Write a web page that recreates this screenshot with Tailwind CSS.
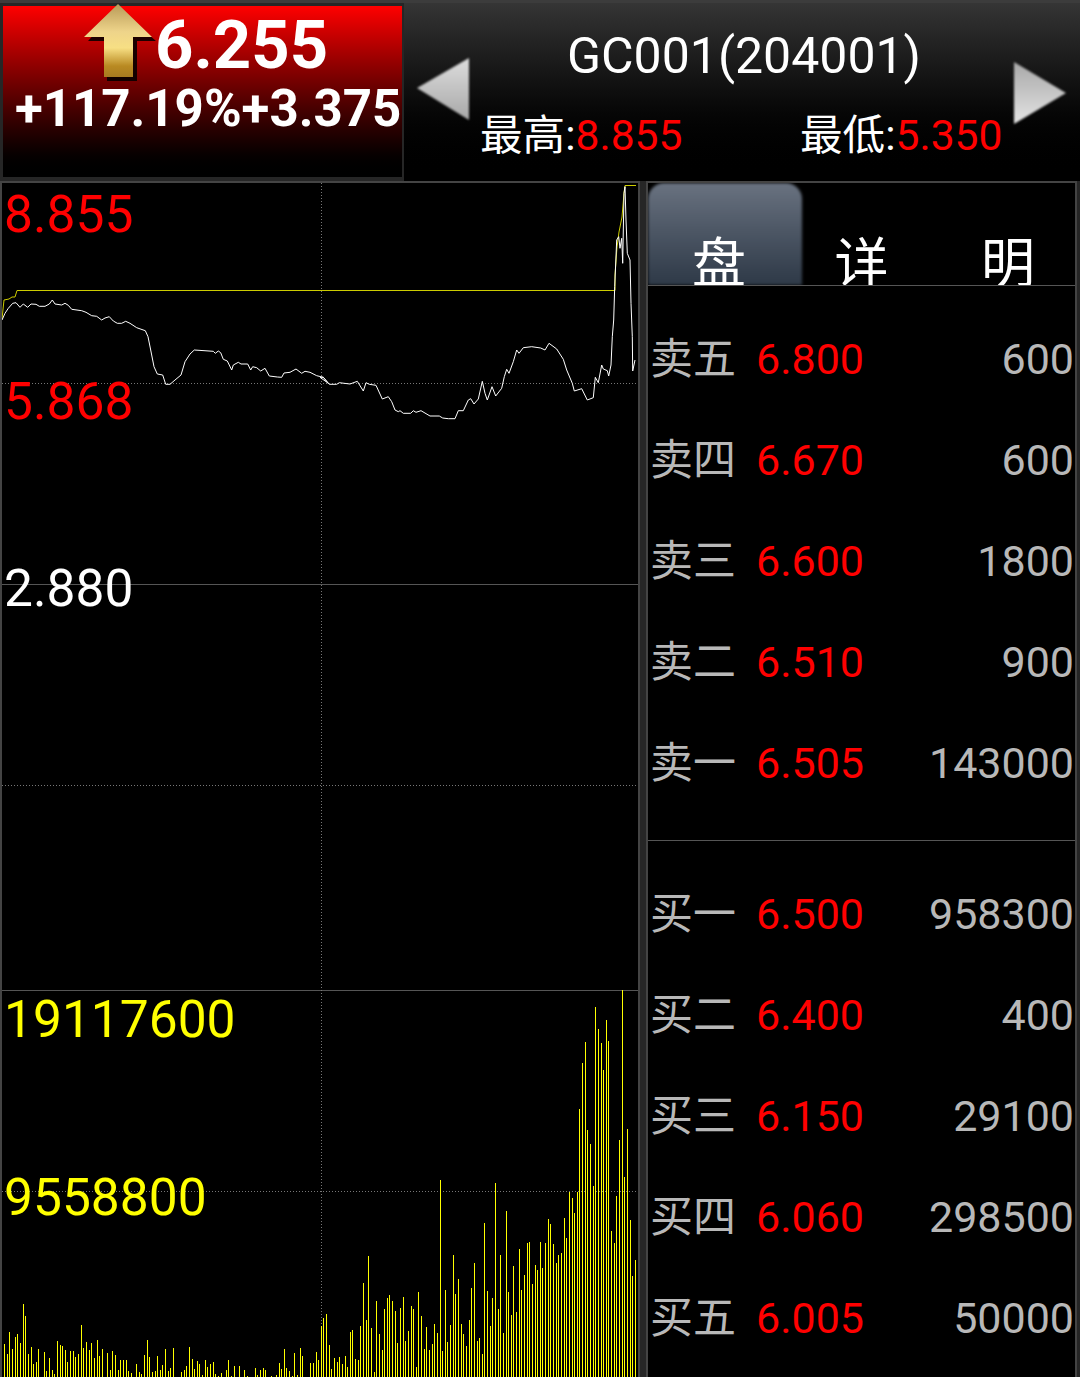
<!DOCTYPE html>
<html lang="zh">
<head>
    <meta charset="UTF-8">
    <title>GC001</title>
    <script src="https://cdn.jsdelivr.net/npm/@tailwindcss/browser@4"></script>
</head>
<body class="bg-[#262626] w-[1080px] h-[1377px] overflow-hidden font-['Roboto','Noto_Sans_CJK_SC',sans-serif]">

    <!-- header -->
    <div class="h-[181px] flex border-t-[3px] border-[#3c3c3c] bg-[#262626]">
        <div class="relative w-[399px] h-[171px] ml-[3px] mt-[3px] bg-gradient-to-b from-[#ff0000] to-[#000000] text-white font-bold">
            <svg class="absolute left-[75px] top-[-8px] blur-[0.5px]" width="84" height="86" viewBox="78 -2 84 86">
                <defs>
                    <linearGradient id="gold" x1="0" y1="0" x2="0" y2="1">
                        <stop offset="0" stop-color="#b89a58"/>
                        <stop offset="0.38" stop-color="#eed48a"/>
                        <stop offset="0.6" stop-color="#f7df84"/>
                        <stop offset="0.85" stop-color="#b98a22"/>
                        <stop offset="1" stop-color="#a87a20"/>
                    </linearGradient>
                </defs>
                <path d="M118 8L156 41H137V81H107V41H88Z" fill="#000" opacity="0.85"/>
                <path d="M118 4L152 37H133V77H104V37H84Z" fill="url(#gold)"/>
            </svg>
            <div class="absolute left-[152px] top-[3px] text-[67px] leading-[72px]">6.255</div>
            <div class="absolute left-[12px] top-[73px] text-[51px] leading-[60px] whitespace-nowrap">+117.19%+3.375</div>
        </div>
        <div class="relative ml-[2px] flex-1 bg-gradient-to-b from-[#353535] to-[#000000] text-white">
            <svg class="absolute left-[10px] top-[52px] blur-[1px]" width="60" height="70" viewBox="0 0 60 70">
                <defs>
                    <linearGradient id="triLeft" x1="0" y1="0" x2="0" y2="1">
                        <stop offset="0" stop-color="#dddddd"/>
                        <stop offset="1" stop-color="#a8a8a8"/>
                    </linearGradient>
                    <linearGradient id="triRight" x1="0" y1="0" x2="0" y2="1">
                        <stop offset="0" stop-color="#a8a8a8"/>
                        <stop offset="1" stop-color="#e4e4e4"/>
                    </linearGradient>
                </defs>
                <path d="M3 33L55 3V65Z" fill="url(#triLeft)"/>
            </svg>
            <svg class="absolute left-[607px] top-[56px] blur-[1px]" width="60" height="70" viewBox="0 0 60 70">
                <path d="M3 3L55 34L3 65Z" fill="url(#triRight)"/>
            </svg>
            <div class="absolute left-[163px] top-[23px] text-[50px] leading-[60px] whitespace-nowrap">GC001(204001)</div>
            <div class="absolute left-[76px] top-[107px] text-[42.6px] leading-[50px] whitespace-nowrap">最高:<span class="text-[#ff0000]">8.855</span></div>
            <div class="absolute left-[396px] top-[107px] text-[42.6px] leading-[50px] whitespace-nowrap">最低:<span class="text-[#ff0000]">5.350</span></div>
        </div>
    </div>

    <div class="flex h-[1196px]">
        <!-- chart -->
        <div class="relative w-[640px] bg-black border-l-2 border-r-2 border-t-2 border-[#444444] overflow-hidden">
            <svg id="chart" class="absolute left-[-2px] top-[-2px]" width="640" height="1196" viewBox="0 181 640 1196"></svg>
            <div class="absolute left-[2px] top-[2px] text-[51.5px] leading-[60px] text-[#ff0000]">8.855</div>
            <div class="absolute left-[2px] top-[189px] text-[51.5px] leading-[60px] text-[#ff0000]">5.868</div>
            <div class="absolute left-[2px] top-[376px] text-[51.5px] leading-[60px] text-white">2.880</div>
            <div class="absolute left-[2px] top-[807px] text-[51.5px] leading-[60px] text-[#ffff00]">19117600</div>
            <div class="absolute left-[2px] top-[985px] text-[51.5px] leading-[60px] text-[#ffff00]">9558800</div>
        </div>

        <!-- order book -->
        <div class="ml-[6px] w-[431px] bg-black border-l-2 border-r-2 border-t-2 border-[#444444] overflow-hidden">
            <div class="flex h-[103px] border-b border-[#555555] overflow-hidden text-white text-[54px] leading-[60px]">
                <div class="relative w-[154px] flex items-end justify-center pr-[12px]">
                    <div class="absolute inset-0 rounded-t-[16px] bg-gradient-to-b from-[#697280] to-[#2e3947] blur-[1.5px]"></div>
                    <span class="relative mb-[-10px]">盘</span>
                </div>
                <div class="w-[135px] flex items-end justify-center pr-[16px]"><span class="mb-[-10px]">详</span></div>
                <div class="flex-1 flex items-end justify-center pl-[4px]"><span class="mb-[-10px]">明</span></div>
            </div>
            <div id="sell" class="h-[555px] pt-[23px] border-b border-[#555555]"></div>
            <div id="buy" class="pt-[23px]"></div>
        </div>
    </div>

    <script>
        const chart = document.getElementById("chart");

        function addLine(tag, attrs) {
            const el = document.createElementNS("http://www.w3.org/2000/svg", tag);
            Object.keys(attrs).forEach(k => el.setAttribute(k, attrs[k]));
            chart.appendChild(el);
        }

        // grid
        [[383, true], [785, true], [1191, true], [584, false], [990, false]].forEach(([y, dotted]) => {
            addLine("line", {
                x1: 2, x2: 638, y1: y + 0.5, y2: y + 0.5,
                stroke: dotted ? "#777777" : "#555555",
                "stroke-dasharray": dotted ? "1 2" : "none"
            });
        });
        addLine("line", { x1: 321.5, x2: 321.5, y1: 183, y2: 1377, stroke: "#777777", "stroke-dasharray": "1 2" });

        // volume bars, read off the crops
        const barsLeft = [[13,372],[22,402],[28,336],[37,387],[46,351],[52,342],[61,369],[70,252],[76,288],[85,402],[94,381],[100,432],[109,426],[115,387],[133,396],[139,453],[148,414],[157,450],[163,462],[172,363],[181,375],[187,378],[196,390],[202,426],[211,393],[220,393],[226,411],[235,402],[244,315],[250,384],[259,366],[268,390],[274,369],[283,414],[292,360],[298,408],[307,387],[322,399],[331,450],[337,393],[346,405],[355,450],[361,420],[370,420],[379,420],[385,453],[394,459],[409,432],[418,456],[424,462],[433,405],[442,360],[448,411],[457,456],[466,453],[472,408],[481,450],[487,435],[496,387],[505,453],[511,444],[520,384],[544,456],[553,450],[559,438],[568,381],[577,417],[583,447],[592,423],[598,432],[607,465],[616,420],[622,441],[631,432],[640,426],[646,462],[655,468],[664,459],[679,450],[685,420],[694,468],[703,438],[718,438],[733,450],[742,468],[766,444],[772,465],[781,450],[790,444],[796,450],[814,468],[829,465],[838,429],[844,447],[853,387],[859,444],[868,453],[877,468],[883,399],[892,465],[901,384],[907,408],[931,429],[940,429],[949,396],[955,420]];
        const barsMid = [[4,438],[10,414],[19,402],[28,495],[34,567],[43,534],[52,546],[58,531],[67,552],[76,528],[82,561],[91,456],[97,450],[106,537],[115,540],[121,438],[130,309],[139,420],[145,228],[154,444],[163,576],[169,363],[178,462],[187,510],[193,387],[202,354],[208,345],[217,363],[226,393],[232,489],[241,384],[250,351],[256,483],[265,453],[274,378],[280,387],[289,561],[295,336],[304,408],[313,507],[319,441],[328,510],[337,492],[343,432],[352,459],[361,0],[367,513],[376,330],[382,486],[391,435],[400,225],[406,342],[415,297],[424,432],[430,462],[439,498],[448,420],[454,324],[463,249],[472,483],[478,474],[487,522],[493,129],[502,333],[511,438],[517,354],[526,9],[535,387],[541,225],[550,459],[559,93],[565,336],[574,405],[580,258],[589,396],[598,207],[604,330],[613,285],[622,189],[628,186],[637,312],[646,255],[652,270],[661,186],[667,264],[676,189],[685,117],[691,132],[700,192],[709,249],[715,225],[724,219],[733,114],[739,174],[748,36],[757,54],[763,99],[772,36]];
        const barsTall = [[579,1109],[582,1063],[585,1042],[587,1130],[590,1144],[593,1186],[595,1007],[598,1029],[601,1043],[603,1070],[606,1020],[608,1041],[611,1231],[614,1243],[616,1196],[619,1140],[622,990],[624,1177],[627,1129],[630,1220],[632,1276],[635,1260]];

        let d = "";
        barsLeft.forEach(([x, y]) => { d += "M" + (Math.floor(x / 3) + 0.5) + " 1377V" + (1220 + y / 3).toFixed(0); });
        barsMid.forEach(([x, y]) => { d += "M" + (320 + Math.floor(x / 3) + 0.5) + " 1377V" + (1180 + y / 3).toFixed(0); });
        barsTall.forEach(([x, y]) => { d += "M" + (x + 0.5) + " 1377V" + y; });
        addLine("path", { d: d, stroke: "#ffff00", "stroke-width": 1, fill: "none" });

        // average line
        addLine("polyline", {
            points: "2,319 4,300 9,299 12,297 15,297 17,290.5 615,290.5 615,275 617,247 619,232 622,217 624,193 625,185.5 636,185.5",
            fill: "none", stroke: "#cccc00", "stroke-width": 1
        });

        // price line
        const priceLeft = [[6,120],[15,100],[25,85],[38,70],[48,68],[60,82],[70,72],[83,82],[93,72],[108,73],[118,79],[135,79],[148,72],[157,60],[165,72],[185,75],[195,70],[205,76],[215,88],[245,92],[258,97],[275,107],[290,109],[305,120],[315,114],[328,110],[340,123],[352,130],[365,130],[377,124],[390,130],[410,143],[436,152],[444,170],[452,210],[462,260],[472,282],[488,285],[497,313],[510,313],[525,300],[543,285],[555,245],[570,222],[583,210],[640,214],[646,220],[655,213],[662,218],[670,238],[682,243],[695,270],[700,255],[715,247],[723,252],[743,252],[752,270],[758,260],[770,263],[782,273],[795,265],[808,288],[832,291],[845,292],[852,279],[870,277],[888,267],[905,280],[915,274],[930,277],[950,287],[970,292],[985,310]];
        const priceRight = [[0,622],[10,622],[28,643],[50,643],[58,638],[90,642],[112,634],[130,663],[138,638],[148,643],[168,646],[187,687],[205,680],[215,695],[225,720],[235,725],[240,722],[250,730],[272,730],[280,722],[288,727],[303,722],[330,738],[358,738],[368,744],[385,746],[405,746],[415,722],[430,722],[445,690],[452,686],[462,702],[475,687],[487,634],[495,670],[502,690],[516,650],[527,678],[545,655],[553,620],[560,598],[567,610],[580,575],[590,540],[597,550],[610,533],[635,530],[662,534],[675,540],[687,520],[710,537],[730,568],[740,600],[757,640],[763,663],[785,656],[802,690],[820,683],[826,622],[835,638],[845,585],[850,597],[862,602],[866,618],[873,585],[877,500],[881,450],[884,350],[890,210],[896,200],[900,235],[905,205],[908,280],[912,70],[915,50],[918,150],[922,250],[930,270],[933,400],[937,500],[938,603],[945,570]];
        const pts = priceLeft.map(([x, y]) => (x / 3).toFixed(1) + "," + (280 + y / 3).toFixed(1))
            .concat(priceRight.map(([x, y]) => (320 + x / 3).toFixed(1) + "," + (170 + y / 3).toFixed(1)));
        addLine("polyline", { points: pts.join(" "), fill: "none", stroke: "#ffffff", "stroke-width": 1 });

        // order book rows
        const sell = [["卖五","6.800","600"],["卖四","6.670","600"],["卖三","6.600","1800"],["卖二","6.510","900"],["卖一","6.505","143000"]];
        const buy = [["买一","6.500","958300"],["买二","6.400","400"],["买三","6.150","29100"],["买四","6.060","298500"],["买五","6.005","50000"]];

        function fillRows(id, rows) {
            document.getElementById(id).innerHTML = rows.map(r => `
                <div class="h-[101px] flex items-center text-[43px] whitespace-nowrap">
                    <span class="w-[108px] pl-[2px] text-[#b8b8b8]">${r[0]}</span>
                    <span class="text-[#ff0000]">${r[1]}</span>
                    <span class="flex-1 text-right pr-[1px] text-[#b8b8b8]">${r[2]}</span>
                </div>`).join("");
        }
        fillRows("sell", sell);
        fillRows("buy", buy);
    </script>

</body>
</html>
